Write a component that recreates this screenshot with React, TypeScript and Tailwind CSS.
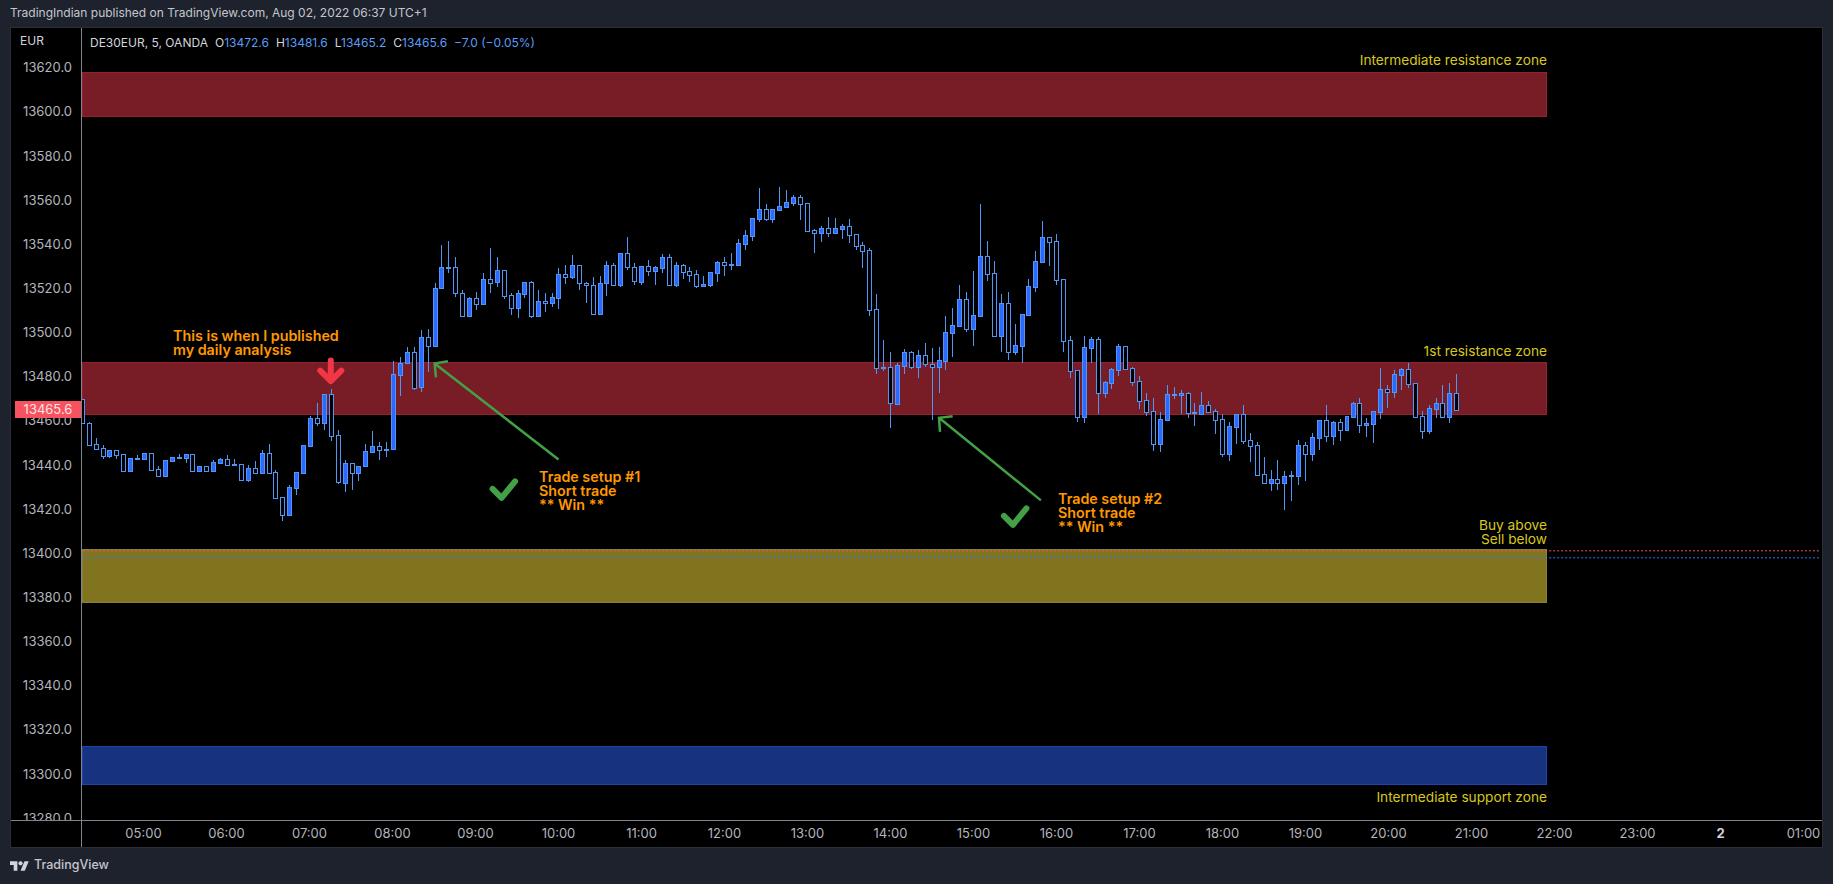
import React from 'react';

// [high, bodyTop, bodyBottom, low, filled] in page pixels
const candles: [number, number, number, number, number][] = [
  [399, 399, 423, 423, 0], [422, 423, 446, 446, 0], [439, 445, 450, 451, 0], [446, 449, 457, 460, 0], [451, 451, 457, 459, 1],
  [451, 451, 456, 460, 0], [455, 455, 472, 472, 0], [459, 459, 472, 472, 1], [456, 459, 460, 460, 0], [454, 454, 460, 460, 1],
  [454, 454, 471, 471, 0], [467, 470, 477, 477, 0], [461, 461, 477, 477, 1], [458, 458, 462, 462, 1], [455, 458, 459, 459, 0],
  [455, 455, 459, 464, 1], [455, 455, 472, 472, 0], [467, 467, 472, 472, 1], [467, 467, 472, 472, 0], [461, 463, 472, 472, 1],
  [459, 460, 464, 464, 1], [456, 460, 466, 466, 0], [460, 465, 466, 466, 0], [465, 465, 481, 481, 0], [466, 469, 481, 483, 1],
  [462, 469, 474, 474, 0], [451, 454, 474, 474, 1], [445, 454, 474, 474, 0], [471, 473, 499, 500, 0], [498, 498, 516, 522, 0],
  [486, 488, 516, 516, 1], [473, 473, 489, 496, 1], [446, 446, 474, 475, 1], [416, 418, 447, 447, 1], [403, 418, 423, 427, 0],
  [394, 394, 423, 431, 1], [389, 394, 437, 442, 0], [431, 436, 483, 485, 0], [461, 464, 484, 493, 1], [464, 464, 474, 491, 0],
  [467, 467, 474, 482, 1], [445, 452, 467, 467, 1], [432, 447, 453, 453, 1], [443, 447, 451, 461, 0], [443, 450, 451, 458, 0],
  [361, 374, 450, 450, 1], [357, 363, 375, 396, 1], [347, 352, 363, 363, 1], [347, 352, 388, 390, 0], [330, 337, 387, 392, 1],
  [329, 337, 346, 372, 0], [283, 288, 346, 347, 1], [245, 267, 288, 288, 1], [241, 267, 268, 273, 0], [257, 267, 293, 297, 0],
  [290, 293, 316, 317, 0], [297, 298, 316, 316, 1], [292, 298, 304, 310, 0], [273, 279, 304, 305, 1], [248, 279, 283, 293, 0],
  [257, 270, 282, 287, 1], [270, 270, 296, 299, 0], [293, 295, 308, 315, 0], [290, 293, 308, 318, 1], [282, 282, 294, 298, 1],
  [281, 282, 316, 318, 0], [290, 301, 316, 316, 1], [293, 301, 303, 312, 0], [293, 297, 303, 307, 1], [268, 274, 298, 309, 1],
  [265, 274, 277, 284, 0], [255, 265, 277, 279, 1], [265, 265, 283, 290, 0], [282, 283, 285, 303, 0], [277, 285, 314, 315, 0],
  [276, 283, 314, 315, 1], [261, 265, 283, 296, 1], [263, 265, 285, 285, 0], [253, 253, 285, 287, 1], [237, 253, 267, 270, 0],
  [263, 267, 281, 285, 0], [266, 266, 282, 285, 1], [260, 266, 271, 276, 0], [266, 267, 271, 285, 1], [254, 257, 268, 273, 1],
  [254, 257, 285, 285, 0], [262, 265, 285, 287, 1], [264, 265, 272, 279, 0], [267, 271, 275, 282, 0], [270, 274, 286, 288, 0],
  [276, 284, 286, 287, 1], [272, 272, 285, 287, 1], [261, 262, 273, 282, 1], [257, 262, 265, 276, 0], [253, 264, 265, 270, 0],
  [239, 243, 265, 266, 1], [230, 235, 244, 250, 1], [218, 218, 236, 241, 1], [188, 209, 219, 222, 1], [204, 209, 219, 221, 0],
  [209, 209, 219, 223, 1], [187, 206, 210, 211, 1], [190, 202, 207, 208, 1], [195, 197, 203, 206, 1], [195, 197, 204, 220, 0],
  [203, 203, 231, 231, 0], [229, 230, 233, 253, 0], [226, 228, 233, 242, 1], [217, 228, 233, 237, 0], [218, 228, 233, 233, 1],
  [224, 226, 229, 239, 1], [219, 226, 235, 243, 0], [234, 234, 246, 250, 0], [242, 245, 251, 268, 0], [248, 250, 310, 316, 0],
  [294, 309, 368, 374, 0], [340, 367, 368, 371, 0], [352, 367, 403, 429, 0], [363, 365, 404, 405, 1], [349, 352, 366, 374, 1],
  [351, 352, 367, 369, 0], [350, 355, 367, 378, 1], [343, 355, 364, 367, 0], [348, 364, 367, 420, 0], [347, 360, 367, 393, 1],
  [316, 332, 361, 370, 1], [308, 325, 333, 357, 1], [285, 299, 326, 326, 1], [292, 299, 329, 332, 0], [271, 315, 329, 346, 1],
  [204, 256, 316, 316, 1], [241, 256, 274, 281, 0], [261, 273, 336, 336, 0], [294, 303, 336, 352, 1], [292, 303, 352, 360, 0],
  [324, 345, 352, 355, 1], [314, 314, 346, 363, 1], [279, 286, 315, 315, 1], [251, 261, 287, 292, 1], [221, 237, 262, 263, 1],
  [237, 237, 242, 266, 0], [234, 241, 280, 285, 0], [279, 279, 341, 352, 0], [336, 340, 371, 378, 0], [370, 370, 417, 422, 0],
  [336, 347, 417, 423, 1], [337, 339, 348, 363, 1], [337, 339, 393, 414, 0], [381, 382, 393, 398, 1], [368, 369, 383, 389, 1],
  [344, 346, 370, 376, 1], [346, 346, 369, 369, 0], [367, 368, 382, 386, 0], [376, 381, 401, 409, 0], [393, 400, 412, 416, 0],
  [398, 411, 445, 452, 0], [412, 419, 445, 453, 1], [385, 394, 420, 420, 1], [387, 394, 395, 399, 0], [390, 393, 395, 414, 1],
  [392, 393, 413, 418, 0], [403, 412, 413, 427, 0], [392, 405, 414, 414, 1], [401, 405, 412, 413, 0], [409, 411, 420, 435, 0],
  [414, 419, 455, 458, 0], [422, 427, 455, 462, 1], [414, 414, 428, 445, 1], [405, 414, 442, 445, 0], [434, 441, 447, 463, 0],
  [443, 446, 476, 476, 0], [458, 475, 484, 485, 0], [471, 480, 484, 492, 1], [461, 480, 484, 491, 0], [472, 477, 484, 511, 1],
  [472, 476, 477, 502, 0], [441, 446, 477, 486, 1], [443, 446, 455, 482, 0], [434, 438, 455, 462, 1], [420, 420, 439, 451, 1],
  [405, 420, 437, 443, 0], [421, 422, 437, 446, 1], [419, 422, 431, 442, 0], [416, 416, 431, 431, 1], [402, 403, 417, 417, 1],
  [398, 403, 426, 434, 0], [418, 423, 426, 438, 1], [411, 411, 424, 444, 1], [368, 389, 412, 419, 1], [385, 389, 392, 408, 0],
  [370, 374, 392, 398, 1], [368, 369, 375, 390, 1], [363, 369, 384, 388, 0], [383, 383, 417, 417, 0], [411, 416, 432, 440, 0],
  [405, 408, 432, 435, 1], [398, 403, 409, 418, 1], [385, 403, 417, 418, 0], [383, 393, 417, 423, 1], [374, 393, 410, 410, 0],
];

const prices = [13620, 13600, 13580, 13560, 13540, 13520, 13500, 13480, 13460, 13440, 13420, 13400, 13380, 13360, 13340, 13320, 13300, 13280];
const times = ['05:00', '06:00', '07:00', '08:00', '09:00', '10:00', '11:00', '12:00', '13:00', '14:00', '15:00', '16:00', '17:00', '18:00', '19:00', '20:00', '21:00', '22:00', '23:00', '2', '01:00'];

const zones = [
  { y: 72, h: 44, fill: '#781d26', stroke: '#93222e' },
  { y: 362, h: 52, fill: '#781d26', stroke: '#93222e' },
  { y: 550, h: 53, fill: '#80741f', stroke: '#8b8034' },
  { y: 747, h: 38, fill: '#17337f', stroke: '#1c44ad' },
];

const Chart = () => (
  <svg className="absolute inset-0 h-full w-full" viewBox="82 28 1740 793">
    {zones.map((z) => (
      <rect key={z.y} x={81.5} y={z.y + 0.5} width={1466} height={z.h} fill={z.fill} stroke={z.stroke} shapeRendering="crispEdges" />
    ))}
    <g shapeRendering="crispEdges">
      {candles.map(([high, top, bottom, low, filled], i) => {
        const c = Math.floor(81.3 + 6.917 * i) + 0.5;
        return (
          <g key={i}>
            <line x1={c} x2={c} y1={high} y2={low} stroke="#5096f5" />
            <rect x={c - 2} y={top + 0.5} width={4} height={Math.max(bottom - top, 1)} fill={filled ? '#2d68ff' : '#000'} stroke="#5096f5" />
          </g>
        );
      })}
    </g>
    <line x1={82} x2={1822} y1={551.5} y2={551.5} stroke="#f7525f" strokeDasharray="2 2" />
    <line x1={82} x2={1822} y1={558.5} y2={558.5} stroke="#3b78ff" strokeDasharray="2 2" />

    {/* trade arrows */}
    <g fill="none" stroke="#43a047" strokeWidth={2.5}>
      <path d="M558 460 L434 364 M447.3 361.7 L434 364 L435.3 377.7" />
      <path d="M1041 501 L939 418.3 M952.7 416.7 L939 418.3 L940 432.3" />
    </g>
    <path d="M330 361 V381 M319.5 371 L330 381.5 L340.5 371" fill="none" stroke="#f23645" strokeWidth={6} strokeLinecap="round" strokeLinejoin="round" />
    <g fill="none" stroke="#43a047" strokeWidth={6} strokeLinecap="round" strokeLinejoin="round">
      <path d="M492 489.5 L501 498.5 L514.5 482" />
      <path d="M1004 516.5 L1013 525.5 L1026.5 509" />
    </g>
  </svg>
);

const Note = ({ x, y, lines }: { x: number; y: number; lines: string[] }) => (
  <div className="absolute text-[14.3px] leading-[14px] font-semibold text-[#ff9800] whitespace-nowrap" style={{ left: x - 82, top: y - 28 }}>
    {lines.map((l) => (
      <div key={l}>{l}</div>
    ))}
  </div>
);

const ZoneLabel = ({ y, lines }: { y: number; lines: string[] }) => (
  <div className="absolute left-[1265px] w-[200px] text-right text-[13.7px] leading-[14px] text-[#d8c81d] whitespace-nowrap" style={{ top: y - 28 }}>
    {lines.map((l) => (
      <div key={l}>{l}</div>
    ))}
  </div>
);

export default function App() {
  return (
    <div className="flex h-[884px] w-[1833px] flex-col overflow-hidden bg-[#1e222d] [font-family:Inter,sans-serif]">
      <div className="flex h-[27px] items-center pl-[10px] pb-[1px] text-[12px] text-[#c3c6ce]">
        TradingIndian published on TradingView.com, Aug 02, 2022 06:37 UTC+1
      </div>

      <div className="mx-[10px] grid h-[821px] grid-cols-[71px_1fr] grid-rows-[1fr_27px] border border-[#2a2e39] bg-black">
        <div className="relative overflow-hidden border-r border-[#80838c] text-[13px] text-[#b2b5bd]">
          <div className="absolute left-[9px] top-[4px] text-[12px] leading-[18px] text-[#d1d4dc]">EUR</div>
          <div className="flex flex-col items-end pr-[9px] pt-[18px]">
            {prices.map((p) => (
              <div key={p} className="flex h-[44.15px] shrink-0 items-center">
                {p}.0
              </div>
            ))}
          </div>
          <div className="absolute right-0 top-[373px] flex h-[17px] w-[66px] items-center justify-center bg-[#f7525f] text-[#fbe4e6]">
            13465.6
          </div>
        </div>

        <div className="relative overflow-hidden">
          <Chart />
          <div className="absolute left-[8px] top-[6px] flex gap-[7px] text-[12px] leading-[18px] text-[#d1d4dc]">
            <span>DE30EUR, 5, OANDA</span>
            <span>O<span className="text-[#5b9cf6]">13472.6</span></span>
            <span>H<span className="text-[#5b9cf6]">13481.6</span></span>
            <span>L<span className="text-[#5b9cf6]">13465.2</span></span>
            <span>C<span className="text-[#5b9cf6]">13465.6</span></span>
            <span className="text-[#5b9cf6]">−7.0 (−0.05%)</span>
          </div>
          <ZoneLabel y={53} lines={['Intermediate resistance zone']} />
          <ZoneLabel y={344} lines={['1st resistance zone']} />
          <ZoneLabel y={518} lines={['Buy above', 'Sell below']} />
          <ZoneLabel y={790} lines={['Intermediate support zone']} />
          <Note x={173} y={329} lines={['This is when I published', 'my daily analysis']} />
          <Note x={539} y={470} lines={['Trade setup #1', 'Short trade', '** Win **']} />
          <Note x={1058} y={492} lines={['Trade setup #2', 'Short trade', '** Win **']} />
        </div>

        <div className="border-t border-r border-[#80838c]" />
        <div className="flex overflow-hidden border-t border-[#80838c] pl-[20px] text-[13px] text-[#b2b5bd]">
          {times.map((t) => (
            <div key={t} className={`flex w-[83px] shrink-0 items-center justify-center ${t === '2' ? 'font-bold text-[#d1d4dc]' : ''}`}>
              {t}
            </div>
          ))}
        </div>
      </div>

      <div className="flex flex-1 items-center gap-[5px] pl-[10px] pb-[1px]">
        <svg viewBox="0 0 36 18" className="h-[10px] w-[19px] fill-[#d1d4dc]">
          <path d="M14 18H7V7H0V0h14v18zM28 18h-8l7.5-18h8L28 18z" />
          <circle cx="20" cy="4" r="4" />
        </svg>
        <span className="text-[12.5px] font-medium text-[#c3c6ce]">TradingView</span>
      </div>
    </div>
  );
}
